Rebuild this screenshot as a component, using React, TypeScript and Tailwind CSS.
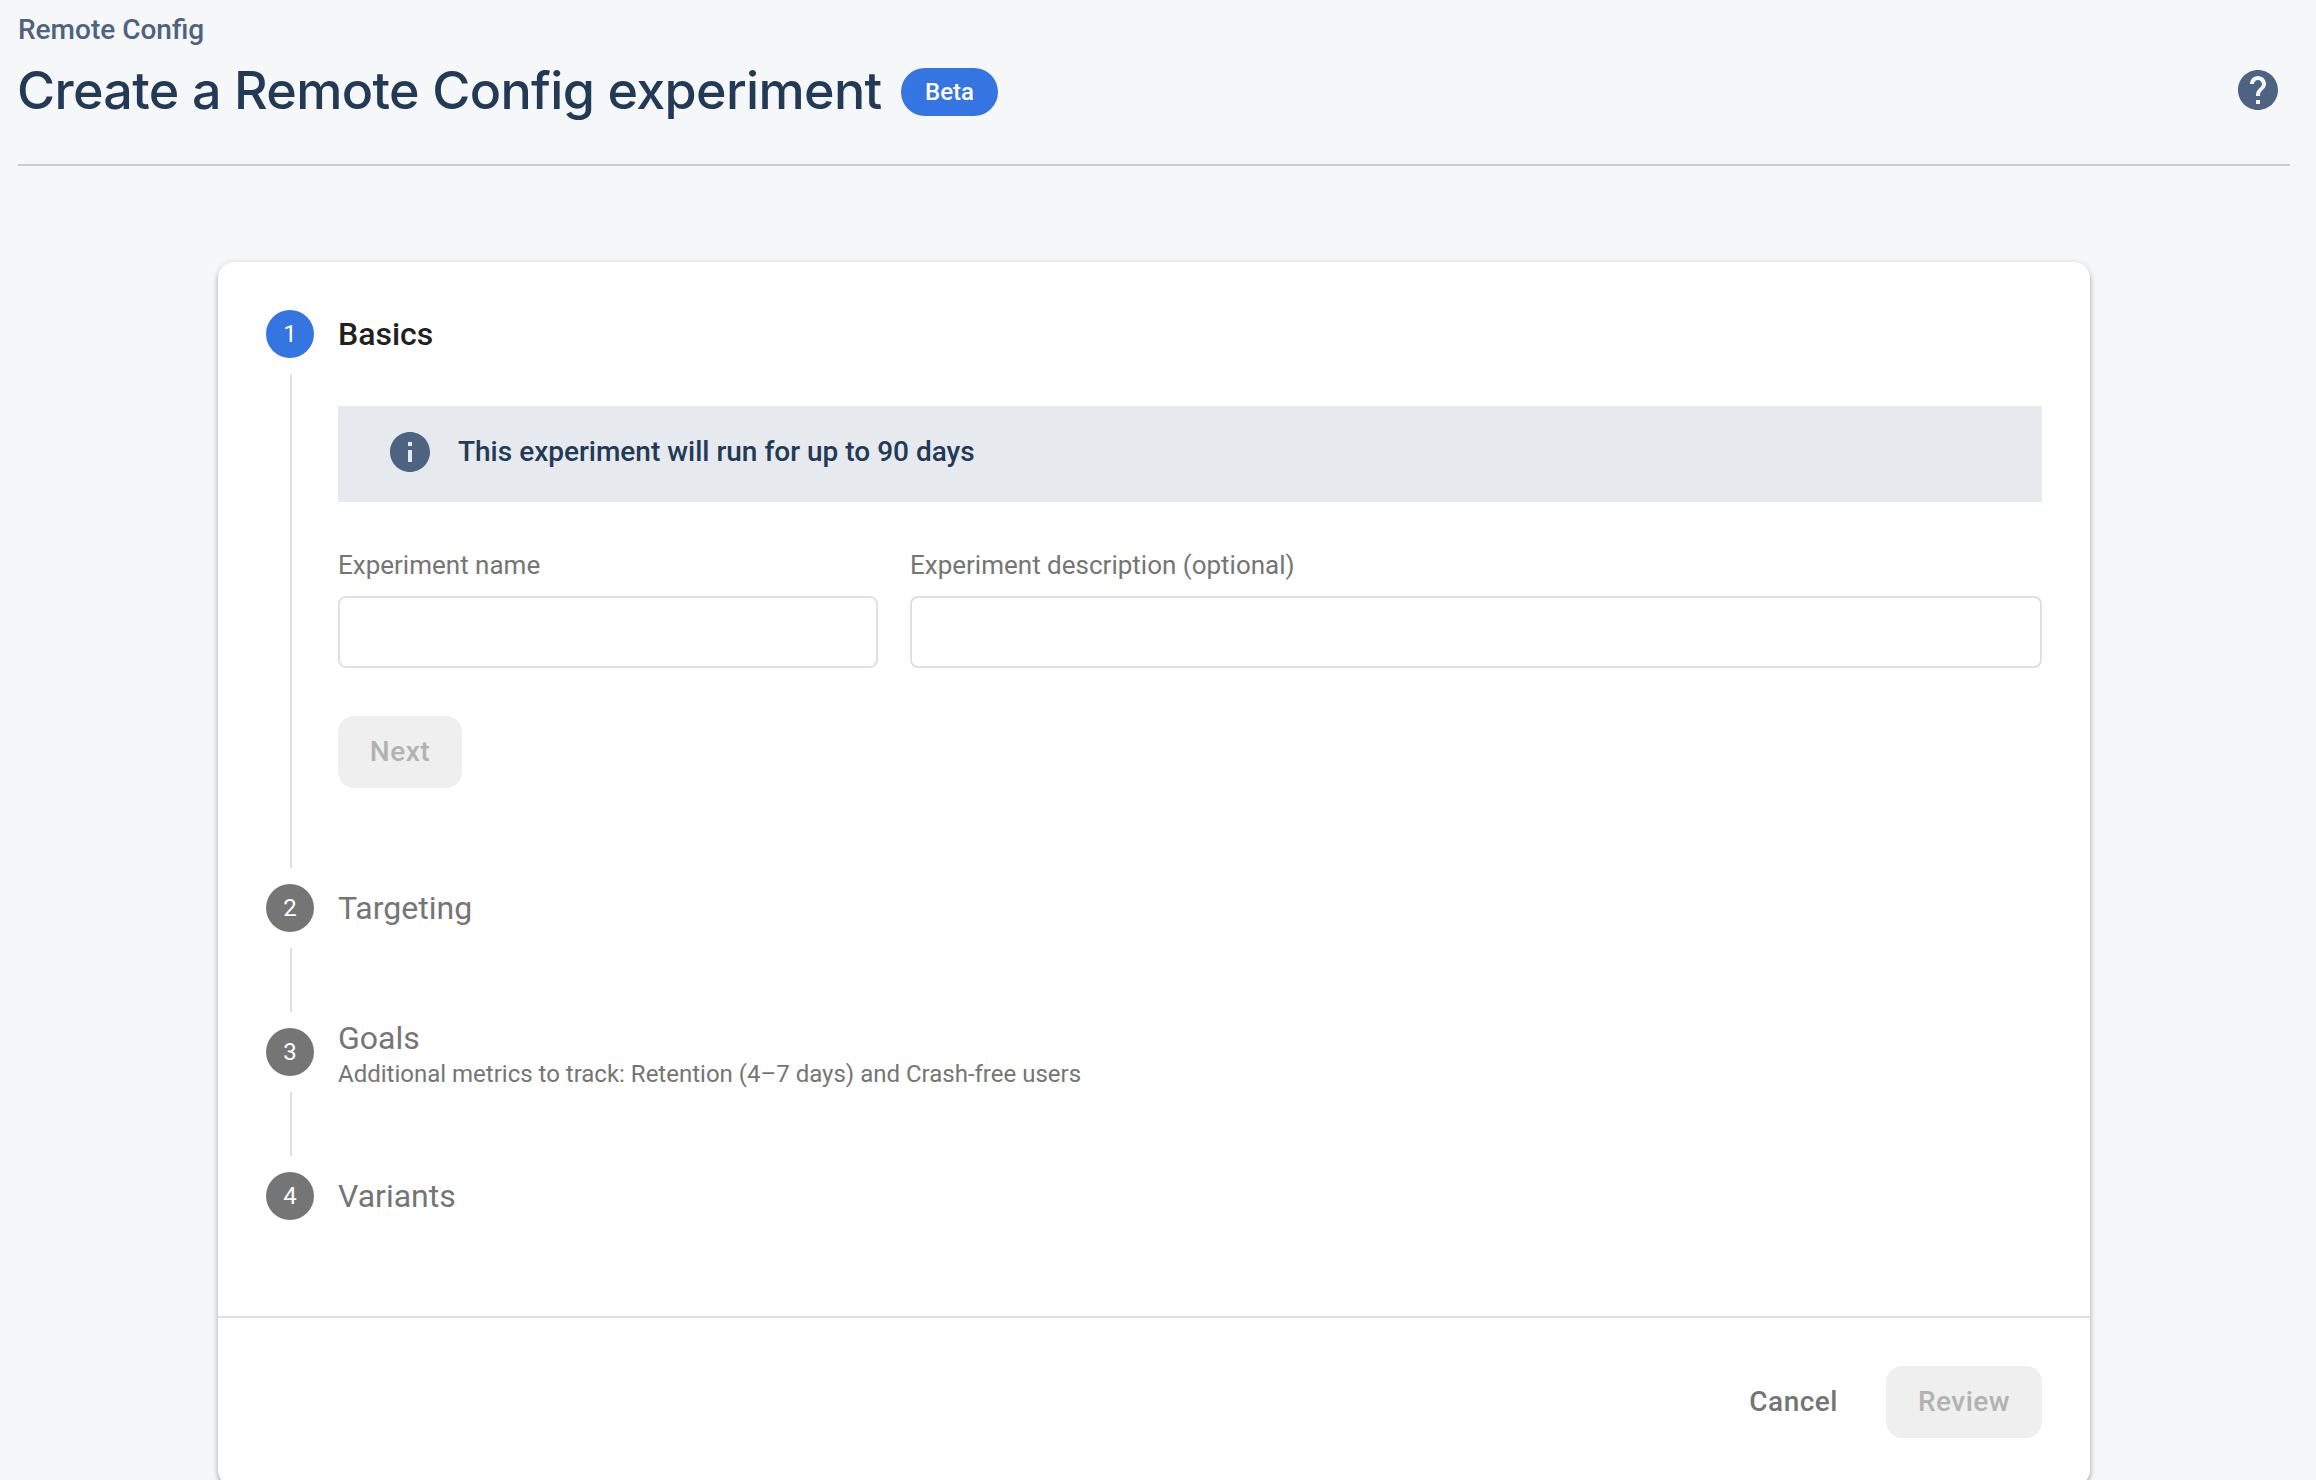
import type { ReactNode } from "react";

function HelpIcon({ className }: { className?: string }) {
  return (
    <svg viewBox="0 0 24 24" fill="currentColor" className={className}>
      <path d="M12 2C6.48 2 2 6.48 2 12s4.48 10 10 10 10-4.48 10-10S17.52 2 12 2zm1 17h-2v-2h2v2zm2.07-7.75l-.9.92C13.45 12.9 13 13.5 13 15h-2v-.5c0-1.1.45-2.1 1.17-2.83l1.24-1.26c.37-.36.59-.86.59-1.41 0-1.1-.9-2-2-2s-2 .9-2 2H8c0-2.21 1.79-4 4-4s4 1.79 4 4c0 .88-.36 1.68-.93 2.25z" />
    </svg>
  );
}

function InfoIcon({ className }: { className?: string }) {
  return (
    <svg viewBox="0 0 24 24" fill="currentColor" className={className}>
      <path d="M12 2C6.48 2 2 6.48 2 12s4.48 10 10 10 10-4.48 10-10S17.52 2 12 2zm1 15h-2v-6h2v6zm0-8h-2V7h2v2z" />
    </svg>
  );
}

function StepHeader({
  number,
  title,
  subtitle,
  active = false,
}: {
  number: number;
  title: string;
  subtitle?: string;
  active?: boolean;
}) {
  return (
    <div className="flex h-12 gap-6">
      <div
        className={`flex size-12 shrink-0 items-center justify-center rounded-full text-2xl text-white ${
          active ? "bg-[#3575e2]" : "bg-[#757575]"
        }`}
      >
        {number}
      </div>
      {subtitle ? (
        <div className="-mt-2 flex flex-col gap-0.5 whitespace-nowrap text-[#757575]">
          <h2 className="text-[32px] leading-9">{title}</h2>
          <p className="text-2xl">{subtitle}</p>
        </div>
      ) : (
        <h2
          className={`text-[32px] leading-12 ${
            active ? "font-medium text-[#212121]" : "text-[#757575]"
          }`}
        >
          {title}
        </h2>
      )}
    </div>
  );
}

function StepBody({ children }: { children?: ReactNode }) {
  return (
    <div className="flex">
      <div className="my-4 ml-6 mr-[46px] min-h-16 w-0.5 shrink-0 bg-[#e0e0e0]" />
      <div className="flex-1">{children}</div>
    </div>
  );
}

function Field({ label, className }: { label: string; className: string }) {
  return (
    <label className={`flex flex-col gap-[11px] ${className}`}>
      <span className="text-[26px] leading-10 text-[#757575]">{label}</span>
      <input
        type="text"
        className="h-18 w-full rounded-lg border-2 border-[#e0e0e0] bg-white px-4 text-[28px] outline-none"
      />
    </label>
  );
}

export default function App() {
  return (
    <div className="h-screen overflow-hidden bg-[#f6f7f9] font-[Roboto,sans-serif]">
      <header className="ml-[18px] mr-[26px] flex h-[166px] flex-col border-b-2 border-[#c3cfdb] pt-2.5">
        <div className="text-[28px] font-medium leading-10 text-[#4e6281]">Remote Config</div>
        <div className="mt-2 flex h-16 items-center">
          <h1 className="-ml-px mt-0.5 w-[864px] whitespace-nowrap font-[Inter,sans-serif] text-[52px] font-medium leading-16 tracking-[-0.65px] text-[#233a57]">
            Create a Remote Config experiment
          </h1>
          <span className="ml-5 mt-1 flex h-12 w-[97px] items-center justify-center rounded-full bg-[#3575e2] text-2xl font-medium text-white">
            Beta
          </span>
          <button className="ml-auto mr-2 text-[#4e6281]" aria-label="Help">
            <HelpIcon className="size-12" />
          </button>
        </div>
      </header>

      <main className="ml-[218px] mt-24 w-[1872px] rounded-2xl bg-white shadow-[0_4px_4px_rgba(0,0,0,0.12),0_2px_6px_rgba(0,0,0,0.24)]">
        <div className="px-12 pt-12 pb-24">
          <StepHeader number={1} title="Basics" active />
          <StepBody>
            <div className="pt-12 pb-24">
              <div className="flex h-24 gap-6 bg-[#e6e9ee] px-12 pt-[22px]">
                <InfoIcon className="size-12 text-[#4e6281]" />
                <p className="text-[28px] font-medium leading-12 text-[#233a57]">
                  This experiment will run for up to 90 days
                </p>
              </div>
              <div className="mt-[43px] flex gap-8">
                <Field label="Experiment name" className="w-[540px]" />
                <Field label="Experiment description (optional)" className="flex-1" />
              </div>
              <button
                disabled
                className="mt-12 h-18 w-31 rounded-2xl bg-[#efefef] text-[28px] font-medium tracking-[0.5px] text-[#b2b2b2]"
              >
                Next
              </button>
            </div>
          </StepBody>
          <StepHeader number={2} title="Targeting" />
          <StepBody />
          <StepHeader
            number={3}
            title="Goals"
            subtitle="Additional metrics to track: Retention (4–7 days) and Crash-free users"
          />
          <StepBody />
          <StepHeader number={4} title="Variants" />
        </div>
        <footer className="flex justify-end gap-4 border-t-2 border-[#e0e0e0] p-12">
          <button className="h-18 px-8 text-[28px] font-medium tracking-[0.5px] text-[#757575]">
            Cancel
          </button>
          <button
            disabled
            className="h-18 w-39 rounded-2xl bg-[#efefef] text-[28px] font-medium tracking-[0.5px] text-[#b2b2b2]"
          >
            Review
          </button>
        </footer>
      </main>
    </div>
  );
}
